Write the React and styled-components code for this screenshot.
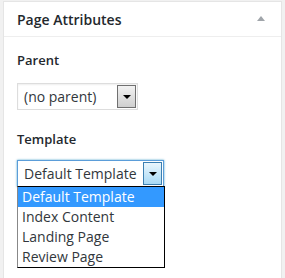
import React from 'react';
import styled, { createGlobalStyle } from 'styled-components';

const GlobalStyle = createGlobalStyle`
  html, body {
    margin: 0;
    padding: 0;
    background: #f1f1f1;
    font-family: 'Open Sans', sans-serif;
    color: #23282d;
  }
`;

const Page = styled.div`
  width: 285px;
  height: 278px;
  padding: 1px 3px 0 3px;
  box-sizing: border-box;
  overflow: hidden;
`;

const Box = styled.div`
  background: #fff;
  border: 1px solid #e5e5e5;
  border-bottom: none;
  height: 100%;
  box-sizing: border-box;
`;

const Header = styled.div`
  display: flex;
  align-items: center;
  justify-content: space-between;
  height: 34px;
  padding: 0 16px 0 13px;
  border-bottom: 1px solid #eee;
`;

const Title = styled.h2`
  margin: 0;
  font-size: 14px;
  font-weight: 600;
  color: #23282d;
`;

const Toggle = styled.span`
  width: 0;
  height: 0;
  margin-top: -2px;
  border-left: 4px solid transparent;
  border-right: 4px solid transparent;
  border-bottom: 5px solid #a0a5aa;
`;

const Inside = styled.div`
  padding: 14px 13px 0 13px;
  display: flex;
  flex-direction: column;
`;

const Label = styled.p`
  margin: 0 0 ${p => p.$gap}px 0;
  font-size: 13px;
  font-weight: 600;
  color: #23282d;
`;

const Select = styled.div`
  position: relative;
  display: flex;
  align-items: stretch;
  width: ${p => p.$width}px;
  height: 27px;
  box-sizing: border-box;
  border: 1px solid ${p => (p.$focused ? '#5b9dd9' : '#ddd')};
  box-shadow: ${p => (p.$focused ? '0 0 2px rgba(30,140,190,.8)' : 'inset 0 1px 2px rgba(0,0,0,.07)')};
  background: #fff;
  margin-bottom: ${p => p.$gap}px;
`;

const Value = styled.span`
  flex: 1;
  padding-left: 6px;
  font-size: 14px;
  line-height: 25px;
  color: #32373c;
  white-space: nowrap;
`;

const Arrow = styled.span`
  width: 17px;
  margin: 1px;
  display: flex;
  align-items: center;
  justify-content: center;
  border: 1px solid ${p => (p.$focused ? '#3c7fb1' : '#707070')};
  background: ${p => (p.$focused
    ? 'linear-gradient(#eaf6fd, #a7d9f5)'
    : 'linear-gradient(#f2f2f2, #cfcfcf)')};
  &:after {
    content: '';
    border-left: 4px solid transparent;
    border-right: 4px solid transparent;
    border-top: 4px solid #000;
  }
`;

const List = styled.ul`
  position: absolute;
  top: 25px;
  left: -1px;
  width: 148px;
  margin: 0;
  padding: 0;
  list-style: none;
  background: #fff;
  border: 1px solid #000;
  border-left-color: #888;
  box-sizing: border-box;
`;

const Option = styled.li`
  height: 20px;
  line-height: 20px;
  padding-left: 4px;
  font-size: 14px;
  color: ${p => (p.$selected ? '#fff' : '#32373c')};
  background: ${p => (p.$selected ? '#3399ff' : 'transparent')};
`;

const templates = ['Default Template', 'Index Content', 'Landing Page', 'Review Page'];

export default function App() {
  return (
    <>
      <GlobalStyle />
      <Page>
        <Box>
          <Header>
            <Title>Page Attributes</Title>
            <Toggle />
          </Header>
          <Inside>
            <Label $gap={14}>Parent</Label>
            <Select $width={121} $gap={20}>
              <Value>(no parent)</Value>
              <Arrow />
            </Select>
            <Label $gap={12}>Template</Label>
            <Select $width={147} $focused $gap={0}>
              <Value>Default Template</Value>
              <Arrow $focused />
              <List>
                {templates.map((t, i) => (
                  <Option key={t} $selected={i === 0}>{t}</Option>
                ))}
              </List>
            </Select>
          </Inside>
        </Box>
      </Page>
    </>
  );
}
